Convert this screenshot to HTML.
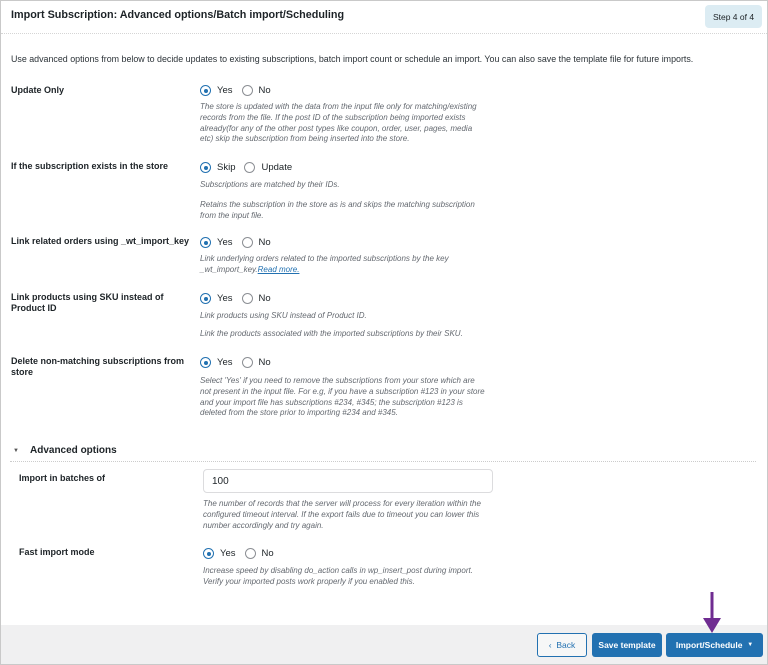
<!DOCTYPE html>
<html><head><style>
*{margin:0;padding:0;box-sizing:border-box}
body{width:768px;height:665px;background:#fff;font-family:"Liberation Sans",sans-serif;color:#1d2327;position:relative;overflow:hidden}
.frame{position:absolute;left:0;top:0;width:768px;height:665px;border:1px solid #c9c9c9}
.a{position:absolute;white-space:nowrap}
.t{font-size:10.8px;font-weight:bold;left:11px;top:9px;color:#1d2327}
.lbl{font-size:9px;font-weight:bold;left:11px;line-height:11px}
.d{font-size:8px;font-style:italic;color:#646970;left:200px;line-height:10.8px}
.r{font-size:9.5px;display:flex;align-items:center}
.rb{width:11px;height:11px;border:1px solid #8c8f94;border-radius:50%;display:inline-block;margin-right:6px;position:relative;background:#fff}
.rb.on::after{content:"";position:absolute;left:2.5px;top:2.5px;width:4px;height:4px;border-radius:50%;background:#2271b1}
.rb.on{border-color:#2271b1}
.sp{width:9px;display:inline-block}
.btn{position:absolute;top:633px;height:24px;font-size:8.5px;font-weight:bold;display:flex;align-items:center;justify-content:center;border-radius:3px}
</style></head><body>
<div class="frame"></div>
<div class="a t">Import Subscription: Advanced options/Batch import/Scheduling</div>
<div class="a" style="left:705px;top:5px;width:57px;height:23px;background:#dcecf3;border-radius:4px;font-size:8.5px;display:flex;align-items:center;justify-content:center">Step 4 of 4</div>
<div class="a" style="left:1px;top:33px;width:766px;border-top:1px dotted #d5d5d5"></div>
<div class="a" style="left:11px;top:54px;font-size:8.9px;color:#2c3338">Use advanced options from below to decide updates to existing subscriptions, batch import count or schedule an import. You can also save the template file for future imports.</div>

<div class="a lbl" style="top:85px">Update Only</div>
<div class="a r" style="left:200px;top:85px"><span class="rb on"></span>Yes<span class="sp"></span><span class="rb"></span>No</div>
<div class="a d" style="top:102px">The store is updated with the data from the input file only for matching/existing<br>records from the file. If the post ID of the subscription being imported exists<br>already(for any of the other post types like coupon, order, user, pages, media<br>etc) skip the subscription from being inserted into the store.</div>

<div class="a lbl" style="top:161px">If the subscription exists in the store</div>
<div class="a r" style="left:200px;top:162px"><span class="rb on"></span>Skip<span class="sp"></span><span class="rb"></span>Update</div>
<div class="a d" style="top:180px">Subscriptions are matched by their IDs.</div>
<div class="a d" style="top:200px">Retains the subscription in the store as is and skips the matching subscription<br>from the input file.</div>

<div class="a lbl" style="top:236px">Link related orders using _wt_import_key</div>
<div class="a r" style="left:200px;top:237px"><span class="rb on"></span>Yes<span class="sp"></span><span class="rb"></span>No</div>
<div class="a d" style="top:254px">Link underlying orders related to the imported subscriptions by the key<br>_wt_import_key.<span style="color:#2271b1;text-decoration:underline">Read more.</span></div>

<div class="a lbl" style="top:292px">Link products using SKU instead of<br>Product ID</div>
<div class="a r" style="left:200px;top:293px"><span class="rb on"></span>Yes<span class="sp"></span><span class="rb"></span>No</div>
<div class="a d" style="top:311px">Link products using SKU instead of Product ID.</div>
<div class="a d" style="top:329px">Link the products associated with the imported subscriptions by their SKU.</div>

<div class="a lbl" style="top:356px">Delete non-matching subscriptions from<br>store</div>
<div class="a r" style="left:200px;top:357px"><span class="rb on"></span>Yes<span class="sp"></span><span class="rb"></span>No</div>
<div class="a d" style="top:376px">Select 'Yes' if you need to remove the subscriptions from your store which are<br>not present in the input file. For e.g, if you have a subscription #123 in your store<br>and your import file has subscriptions #234, #345; the subscription #123 is<br>deleted from the store prior to importing #234 and #345.</div>

<div class="a" style="left:13px;top:448px;font-size:6px;color:#555">▼</div>
<div class="a" style="left:30px;top:445px;font-size:10px;font-weight:bold">Advanced options</div>
<div class="a" style="left:10px;top:461px;width:746px;border-top:1px dotted #ccc"></div>

<div class="a lbl" style="left:19px;top:473px">Import in batches of</div>
<div class="a" style="left:203px;top:469px;width:290px;height:24px;border:1px solid #dcdcde;border-radius:4px;font-size:10px;padding:6px 0 0 8px">100</div>
<div class="a d" style="left:203px;top:499px">The number of records that the server will process for every iteration within the<br>configured timeout interval. If the export fails due to timeout you can lower this<br>number accordingly and try again.</div>

<div class="a lbl" style="left:19px;top:547px">Fast import mode</div>
<div class="a r" style="left:203px;top:548px"><span class="rb on"></span>Yes<span class="sp"></span><span class="rb"></span>No</div>
<div class="a d" style="left:203px;top:566px">Increase speed by disabling do_action calls in wp_insert_post during import.<br>Verify your imported posts work properly if you enabled this.</div>

<div class="a" style="left:1px;top:625px;width:766px;height:39px;background:#f0f0f1"></div>
<div class="btn" style="left:537px;width:50px;border:1px solid #2271b1;background:#f6f7f7;color:#2271b1;font-weight:normal">‹&nbsp; Back</div>
<div class="btn" style="left:592px;width:70px;background:#2271b1;color:#fff">Save template</div>
<div class="btn" style="left:666px;width:97px;background:#2271b1;color:#fff">Import/Schedule&nbsp;&nbsp;<span style="font-size:6px">▼</span></div>
<svg class="a" style="left:700px;top:590px" width="24" height="44" viewBox="0 0 24 44"><line x1="12" y1="2" x2="12" y2="32" stroke="#6f2c91" stroke-width="3"/><path d="M3 28 L12 43 L21 28 Z" fill="#6f2c91"/></svg>
</body></html>
